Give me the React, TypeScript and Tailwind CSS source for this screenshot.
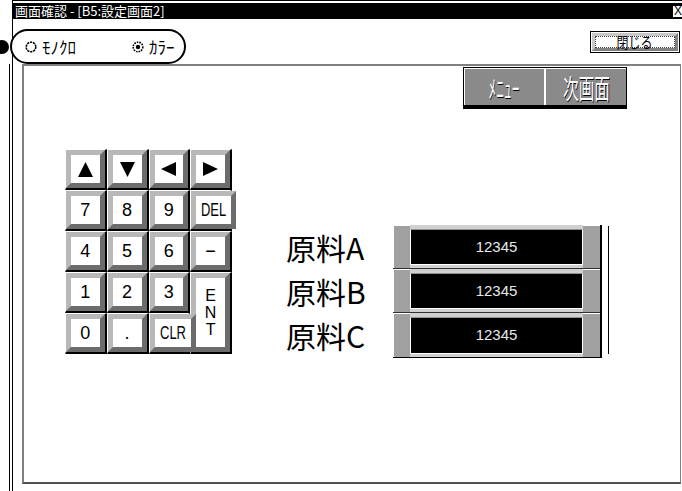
import React from "react";

type Dir = "up" | "down" | "left" | "right";

const Arrow: React.FC<{ dir: Dir }> = ({ dir }) => {
	const points = {
		up: "7.5,0 15,15 0,15",
		down: "0,0 15,0 7.5,15",
		left: "15,0 15,14 0,7",
		right: "0,0 15,7 0,14",
	}[dir];
	return (
		<svg width="15" height="15" viewBox="0 0 15 15">
			<polygon points={points} fill="#000" />
		</svg>
	);
};

interface KeyProps {
	children?: React.ReactNode;
	className?: string;
}

// one keypad button: light outer line, grey bevel, white face, black shadow
const Key: React.FC<KeyProps> = ({ children, className = "" }) => (
	<div
		className={`flex border-t border-l border-r-2 border-b-2 border-t-white border-l-white border-r-black border-b-black ${className}`}
	>
		<div className="flex flex-1 border-[5px] border-t-[#b8b8b8] border-l-[#b8b8b8] border-r-[#6c6c6c] border-b-[#6c6c6c]">
			<div className="flex flex-1 items-center justify-center bg-white font-['Liberation_Sans',sans-serif] text-[18px] leading-none">
				{children}
			</div>
		</div>
	</div>
);

const Radio: React.FC<{ checked?: boolean }> = ({ checked }) => (
	<svg width="12" height="12" viewBox="0 0 12 12">
		<circle
			cx="6"
			cy="6"
			r="4.8"
			fill="#fff"
			stroke="#000"
			strokeWidth="1.6"
			strokeDasharray={checked ? "1.6 1" : "2.2 0.8"}
		/>
		{checked && <circle cx="6" cy="6" r="2.2" fill="#000" />}
	</svg>
);

const Display: React.FC<{ value: string; last?: boolean }> = ({
	value,
	last,
}) => (
	<div
		className={`flex h-[44px] bg-[#d0d0d0] ${last ? "" : "border-b border-[#303030]"}`}
	>
		<div className="w-[17px] border-t border-l border-white bg-[#a0a0a0]" />
		<div className="flex flex-1 pt-[4px] pb-[3px]">
			<div className="flex flex-1 items-center justify-center border border-t-[#909090] border-l-white border-r-white border-b-white bg-black font-['Liberation_Sans',sans-serif] text-[15px] text-[#e8e8e8]">
				{value}
			</div>
		</div>
		<div className="w-[17px] border-t border-white bg-[#a0a0a0]" />
	</div>
);

const materials = ["原料A", "原料B", "原料C"];

export default function App() {
	return (
		<div className="relative flex h-[491px] w-[682px] overflow-hidden bg-white font-['Noto_Sans_CJK_JP',sans-serif] text-black">
			{/* outer guide line */}
			<div className="flex w-[10px] shrink-0 flex-col">
				<div className="h-[64px]" />
				<div className="flex-1 border-r border-black" />
			</div>
			<div className="w-[2px] shrink-0" />

			{/* window */}
			<div className="flex w-[672px] shrink-0 flex-col border-t border-l border-black">
				<div className="mt-[2px] flex h-[16px] items-center justify-between bg-black pl-[2px]">
					<span className="text-[13px] leading-[16px] whitespace-nowrap text-white">
						画面確認 - [B5:設定画面2]
					</span>
					<div className="flex h-[13px] w-[12px] items-center justify-center border border-black bg-white font-['Liberation_Sans',sans-serif] text-[12px] leading-none">
						X
					</div>
				</div>

				{/* toolbar */}
				<div className="flex h-[45px] items-center justify-end pr-[4px]">
					<div className="flex h-[22px] w-[90px] border border-black bg-white p-[1px]">
						<div className="flex flex-1 border-[3px] border-t-[#c8c8c8] border-l-[#c8c8c8] border-r-[#808080] border-b-[#808080]">
							<div className="flex flex-1 items-center justify-center border border-dotted border-[#404040] bg-white">
								<span className="scale-x-[0.8] text-[15px] leading-none whitespace-nowrap">閉じる</span>
							</div>
						</div>
					</div>
				</div>

				{/* screen panel */}
				<div className="mr-[3px] mb-[7px] ml-[9px] flex flex-1 flex-col border-t-2 border-r border-b-2 border-l-2 border-t-[#808080] border-r-[#808080] border-b-[#505050] border-l-[#808080]">
					<div className="flex justify-end pt-[1px] pr-[53px]">
						<div className="flex border border-b-[4px] border-black bg-white">
							<div className="flex h-[37px] w-[80px] items-center justify-center border-t border-l border-white bg-[#8a8a8a]">
								<span className="scale-x-[0.62] text-[25px] leading-none whitespace-nowrap text-white [text-shadow:1px_1px_0_#000]">
									ﾒﾆｭｰ
								</span>
							</div>
							<div className="w-[2px] bg-white" />
							<div className="flex h-[37px] w-[80px] items-center justify-center border-t border-white bg-[#8a8a8a]">
								<span className="scale-x-[0.58] text-[27px] leading-none whitespace-nowrap text-white [text-shadow:1px_1px_0_#000]">
									次画面
								</span>
							</div>
						</div>
					</div>

					<div className="mt-[40px] flex items-start pl-[41px]">
						{/* keypad */}
						<div className="grid w-[167px] grid-cols-4 grid-rows-[repeat(5,41px)]">
							<Key>
								<Arrow dir="up" />
							</Key>
							<Key>
								<Arrow dir="down" />
							</Key>
							<Key>
								<Arrow dir="left" />
							</Key>
							<Key>
								<Arrow dir="right" />
							</Key>
							<Key>7</Key>
							<Key>8</Key>
							<Key>9</Key>
							<Key>
								<span className="scale-x-[0.72]">DEL</span>
							</Key>
							<Key>4</Key>
							<Key>5</Key>
							<Key>6</Key>
							<Key>−</Key>
							<Key>1</Key>
							<Key>2</Key>
							<Key>3</Key>
							<Key className="col-start-4 row-span-2 row-start-4">
								<span className="flex flex-col items-center text-[16px] leading-[17px]">
									<span>E</span>
									<span>N</span>
									<span>T</span>
								</span>
							</Key>
							<Key>0</Key>
							<Key>.</Key>
							<Key>
								<span className="scale-x-[0.72]">CLR</span>
							</Key>
						</div>

						{/* material values */}
						<div className="mt-[76px] ml-[54px] flex items-start">
							<div className="flex w-[107px] flex-col">
								{materials.map((m) => (
									<div key={m} className="flex h-[44px] items-center text-[30px] leading-none whitespace-nowrap">
										{m}
									</div>
								))}
							</div>
							<div className="flex w-[209px] flex-col border-r-2 border-b border-black">
								{materials.map((m, i) => (
									<Display key={m} value="12345" last={i === materials.length - 1} />
								))}
							</div>
							<div className="mt-[1px] ml-[6px] h-[128px] w-px bg-black" />
						</div>
					</div>
				</div>
			</div>

			{/* annotation: colour mode selector */}
			<div className="absolute top-[40px] left-[-5px] h-[14px] w-[14px] rounded-full bg-black" />
			<div className="absolute top-[29px] left-[10px] flex h-[35px] w-[176px] items-center rounded-full border-2 border-black bg-white pl-[13px] text-[17px] leading-none">
				<div className="flex w-[107px] items-center gap-[5px]">
					<Radio />
					<span>ﾓﾉｸﾛ</span>
				</div>
				<div className="flex items-center gap-[5px]">
					<Radio checked />
					<span>ｶﾗｰ</span>
				</div>
			</div>
		</div>
	);
}
